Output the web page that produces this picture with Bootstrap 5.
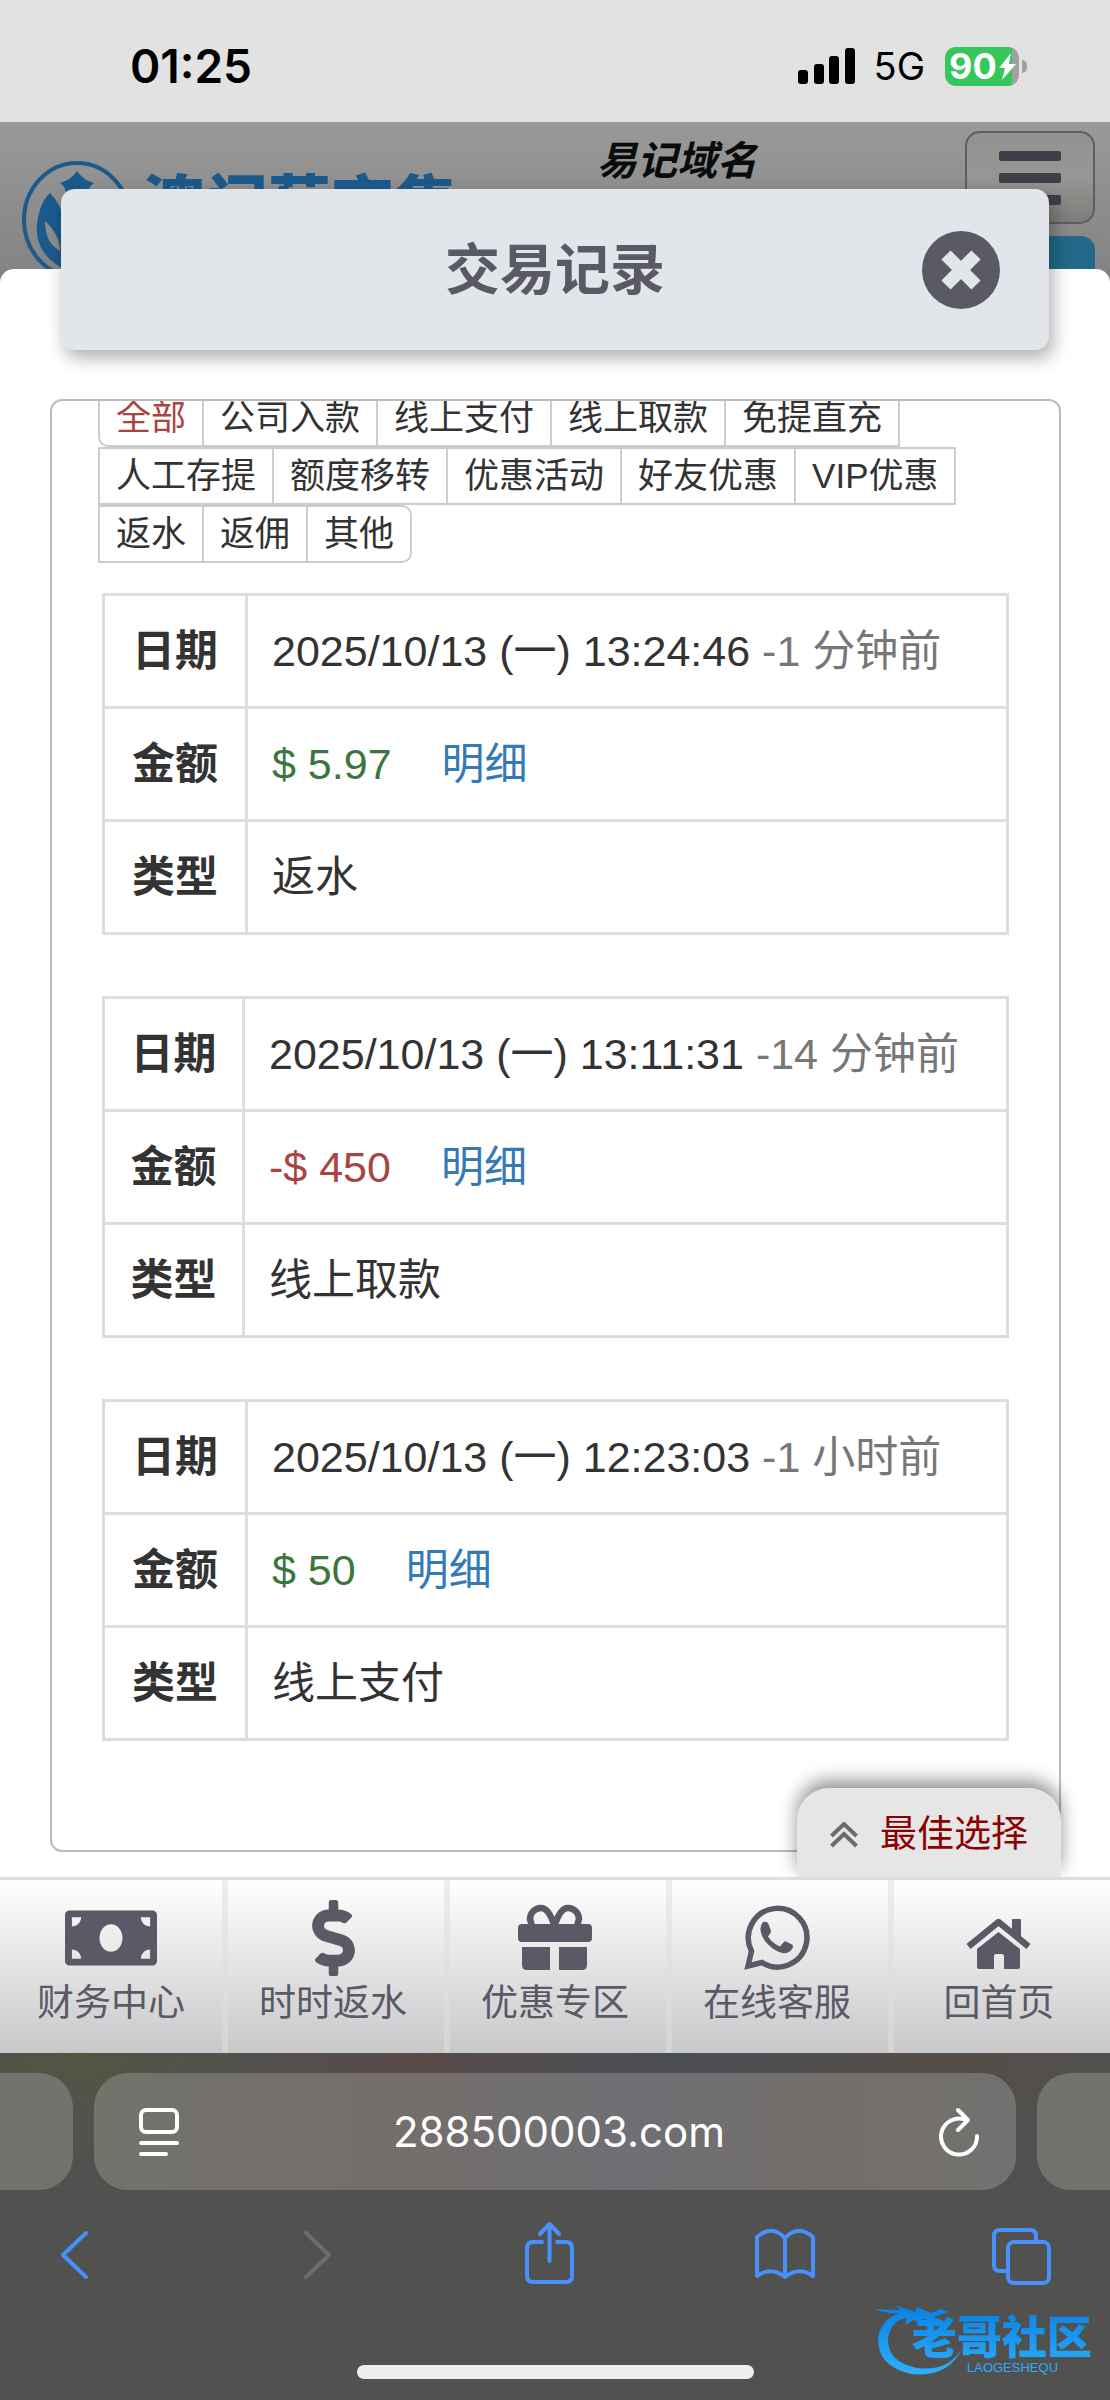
<!DOCTYPE html>
<html lang="zh-CN">
<head>
<meta charset="utf-8">
<meta name="viewport" content="width=device-width, initial-scale=1">
<title>交易记录</title>
<link rel="stylesheet" href="https://cdn.jsdelivr.net/npm/bootstrap@5.3.0/dist/css/bootstrap.min.css">
<style>
  :root { --ink: #5a5966; --rule: #ddd; }
  body { font-family: "Liberation Sans", "Noto Sans CJK SC", sans-serif; color: #333; background: #fff; }
  svg { display: block; flex: none; }

  .status-strip { height: 122px; padding: 10px 84px 0 130px; background: #e2e2e2; color: #000; font-family: Inter, sans-serif; line-height: 48px; }
  .clock { font-size: 46px; font-weight: 600; }
  .net-type { font-size: 38px; margin: 0 20px 0 18px; }
  .battery { width: 74px; height: 39px; border-radius: 11px; background: linear-gradient(90deg, #35c759 67px, #a0a0a0 67px); color: #fff; font-size: 36px; font-weight: 700; line-height: 39px; padding-left: 4px; margin-right: 7px; }
  .battery-nub { right: -8px; top: 13px; width: 5px; height: 13px; background: #a0a0a0; border-radius: 0 5px 5px 0; }
  .battery-bolt { right: 3px; top: 6px; }

  .site-top { height: 161px; padding: 9px 15px 0 20px; background: linear-gradient(#999, #828282); overflow: hidden; }
  .brand { padding-top: 28px; color: #1c5a8c; font-size: 63px; font-weight: 900; line-height: 92px; gap: 10px; }
  .domain-tip { color: #0a0c0c; font-size: 40px; font-weight: 700; font-style: italic; line-height: 60px; padding-left: 140px; }
  .menu-btn { width: 130px; height: 93px; border: 2px solid #5d5d63; border-radius: 15px; background: linear-gradient(#929292, #969694 50%, #7c7c79); }
  .blue-btn { width: 130px; height: 60px; border: 0; border-radius: 14px; background: #236a8a; }

  .sheet { margin-top: -14px; border-radius: 14px 14px 0 0; background: #fff; padding: 0 49px 25px 50px; }
  .sheet-title { margin: -80px 12px 49px 11px; height: 161px; padding: 0 49px; background: #e2e6eb; border-radius: 14px; box-shadow: 4px 8px 18px rgba(0,0,0,.32); color: var(--ink); }
  .sheet-title h1 { font-size: 55px; line-height: 80px; font-weight: 700; }
  .close-btn { width: 78px; height: 78px; border-radius: 50%; background: var(--ink); }
  .title-side { width: 78px; }

  .records { border: 2px solid #bbb; border-radius: 12px; padding: 0 50px 48px; overflow: hidden; }
  .kinds { margin: -12px -4px 30px; padding-left: 2px; }
  .kinds button { margin-left: -2px; border: 2px solid #ccc; background: #fff; padding: 0 16px; font-size: 35px; line-height: 54px; color: #333; }
  .kinds button.active { color: #a94442; }
  .kinds button:first-child { border-bottom-left-radius: 10px; }
  .kinds button:last-child { border-radius: 0 10px 10px 0; }

  .record { margin-bottom: 61px; font-size: 43px; line-height: 61px; border-color: var(--rule); color: #333; }
  .record th, .record td { padding: 25px 24px 24px; border: 3px solid var(--rule); color: #333; background: #fff; box-shadow: none; }
  .record td { padding-right: 0; }
  .record th { width: 143px; text-align: center; font-weight: 700; padding-left: 0; padding-right: 0; }
  .record-long th { width: 140px; }
  .ago { color: #777; }
  .record .gain { color: #3c763d; }
  .record .loss { color: #a94442; }
  .record a { color: #337ab7; text-decoration: none; margin-left: 50px; }

  .best-tab { right: 49px; bottom: 0; width: 264px; height: 89px; border: 0; border-radius: 32px 32px 0 0; background: #e6e6e6; color: #8b0000; font-size: 37px; line-height: 48px; padding: 4px 0 0; gap: 22px; box-shadow: 0 -8px 18px rgba(0,0,0,.42); }

  .dock { border-top: 3px solid var(--rule); background: linear-gradient(#fff, #c8c8ca); }
  .dock a { flex: 1 1 0; padding: 20px 0 25px; color: var(--ink); text-decoration: none; font-size: 37px; line-height: 48px; gap: 4px; }
  .dock a + a { box-shadow: inset 6px 0 0 rgba(222,222,220,.55); }

  .browser-bar { padding-top: 20px; background: radial-gradient(ellipse 200px 90px at 7% 0, rgba(88,92,40,.35), transparent), radial-gradient(ellipse 200px 90px at 38% 0, rgba(100,60,60,.35), transparent), radial-gradient(ellipse 240px 110px at 60% 0, rgba(66,72,92,.4), transparent), radial-gradient(ellipse 200px 100px at 84% 0, rgba(92,68,58,.35), transparent), #515150; }
  .tab-strip { gap: 21px; }
  .tab-peek { width: 73px; background: #72726f; }
  .peek-left { border-radius: 0 34px 34px 0; }
  .peek-right { border-radius: 34px 0 0 34px; }
  .address { height: 117px; border-radius: 34px; padding: 0 37px 0 45px; background: linear-gradient(90deg, #73726b, #746e6b 35%, #6e6f74 58%, #746e6a 80%, #727270); }
  .address button { color: #fff; }
  .site-name { font-family: Inter, sans-serif; font-size: 42px; line-height: 56px; }
  .tools { padding: 28px 58px 0 44px; }
  .tools button { color: #4691fc; }
  .tools button:disabled { color: #6d6d6c; opacity: 1; }
  .home-line { width: 397px; height: 14px; border-radius: 7px; background: #eee; margin: 77px auto 20px; }
  .stamp { right: 15px; bottom: 22px; width: 224px; height: 78px; }
</style>
<script src="https://cdn.jsdelivr.net/npm/bootstrap@5.3.0/dist/js/bootstrap.bundle.min.js"></script>
</head>
<body class="d-flex flex-column min-vh-100">

<div class="status-strip d-flex align-items-center">
  <span class="clock me-auto">01:25</span>
  <svg width="58" height="36" viewBox="0 0 58 36" fill="#000"><rect x="0" y="22" width="10" height="14" rx="3"/><rect x="16" y="16" width="10" height="20" rx="3"/><rect x="31" y="8" width="10" height="28" rx="3"/><rect x="47" y="0" width="10" height="36" rx="3"/></svg>
  <span class="net-type">5G</span>
  <span class="battery position-relative">90<span class="battery-nub position-absolute"></span>
    <svg class="battery-bolt position-absolute" width="18" height="27" viewBox="0 0 18 27"><path d="M13 0 1 15h6L4 27 18 11h-7z" fill="#fff"/></svg></span>
</div>

<header class="site-top d-flex align-items-start">
  <div class="brand d-flex align-items-start">
    <svg width="112" height="124" viewBox="0 0 112 124" fill="#1c5a8c"><ellipse cx="57" cy="61" rx="53" ry="57" fill="none" stroke="#1c5a8c" stroke-width="4"/><path d="M57 12Q63 21 74 24Q67 28 67 42H47Q47 28 40 24Q51 21 57 12ZM30 34Q46 50 43 72Q39 94 52 114Q14 98 17 66Q19 44 30 34Z"/><path d="M25 62Q40 76 40 92Q25 84 25 62Z" fill="#8d8d8d"/></svg>
    <span>澳门葡京集</span>
  </div>
  <span class="domain-tip">易记域名</span>
  <div class="d-flex flex-column gap-2 ms-auto">
    <button class="menu-btn p-0" aria-label="菜单"><svg class="mx-auto" width="62" height="54" viewBox="0 0 62 54" fill="#3f3e49"><rect width="62" height="10" rx="2"/><rect y="22" width="62" height="10" rx="2"/><rect y="44" width="62" height="10" rx="2"/></svg></button>
    <button class="blue-btn mt-1" aria-label="更多"></button>
  </div>
</header>

<main class="sheet position-relative">
  <div class="sheet-title position-relative d-flex align-items-center justify-content-between">
    <span class="title-side"></span>
    <h1 class="m-0">交易记录</h1>
    <button class="close-btn border-0 p-0" aria-label="关闭"><svg class="mx-auto" width="42" height="42" viewBox="0 0 42 42"><path d="M6 6 36 36M36 6 6 36" stroke="#e2e6eb" stroke-width="13"/></svg></button>
  </div>

  <section class="records">
    <div class="kinds d-flex flex-wrap">
      <button class="active">全部</button><button>公司入款</button><button>线上支付</button><button>线上取款</button><button>免提直充</button>
      <button>人工存提</button><button>额度移转</button><button>优惠活动</button><button>好友优惠</button><button>VIP优惠</button>
      <button>返水</button><button>返佣</button><button>其他</button>
    </div>

    <table class="table record">
      <tr><th scope="row">日期</th><td>2025/10/13 (一) 13:24:46 <span class="ago">-1 分钟前</span></td></tr>
      <tr><th scope="row">金额</th><td><span class="gain">$ 5.97</span><a href="#">明细</a></td></tr>
      <tr><th scope="row">类型</th><td>返水</td></tr>
    </table>
    <table class="table record record-long">
      <tr><th scope="row">日期</th><td>2025/10/13 (一) 13:11:31 <span class="ago">-14 分钟前</span></td></tr>
      <tr><th scope="row">金额</th><td><span class="loss">-$ 450</span><a href="#">明细</a></td></tr>
      <tr><th scope="row">类型</th><td>线上取款</td></tr>
    </table>
    <table class="table record">
      <tr><th scope="row">日期</th><td>2025/10/13 (一) 12:23:03 <span class="ago">-1 小时前</span></td></tr>
      <tr><th scope="row">金额</th><td><span class="gain">$ 50</span><a href="#">明细</a></td></tr>
      <tr><th scope="row">类型</th><td>线上支付</td></tr>
    </table>
  </section>

  <button class="best-tab position-absolute d-flex align-items-center justify-content-center">
    <svg width="28" height="26" viewBox="0 0 28 26" fill="none" stroke="#6b6b6b" stroke-width="4"><path d="M1.500 14 14 2 26.500 14M1.500 24 14 12 26.500 24"/></svg>
    <span>最佳选择</span>
  </button>
</main>

<nav class="dock d-flex position-relative">
  <a href="#" class="d-flex flex-column align-items-center">
    <svg width="92" height="76" viewBox="0 -8 640 528" fill="currentColor"><path d="M608 64H32C14.330 64 0 78.330 0 96v320c0 17.670 14.330 32 32 32h576c17.670 0 32-14.330 32-32V96c0-17.670-14.330-32-32-32zM48 400v-64c35.350 0 64 28.650 64 64H48zm0-224v-64h64c0 35.350-28.650 64-64 64zm272 176c-44.190 0-80-42.990-80-96 0-53.020 35.820-96 80-96s80 42.980 80 96c0 53.030-35.830 96-80 96zm272 48h-64c0-35.350 28.650-64 64-64v64zm0-224c-35.350 0-64-28.650-64-64h64v64z"/></svg>
    <span>财务中心</span></a>
  <a href="#" class="d-flex flex-column align-items-center">
    <svg width="43" height="76" viewBox="0 0 288 512" fill="currentColor"><path d="M209.200 233.400l-108-31.600C88.700 198.200 80 186.500 80 173.500c0-16.300 13.200-29.500 29.500-29.500h66.300c12.200 0 24.200 3.700 34.200 10.500 6.100 4.100 14.300 3.100 19.500-2l34.800-34c7.100-6.900 6.100-18.400-1.800-24.500C238 74.800 207.400 64.100 176 64V16c0-8.800-7.200-16-16-16h-32c-8.800 0-16 7.200-16 16v48h-2.500C45.800 64-5.400 118.700.5 183.600c4.200 46.100 39.400 83.600 83.800 96.600l102.500 30c12.500 3.700 21.200 15.300 21.200 28.300 0 16.300-13.200 29.500-29.500 29.500h-66.300C100 368 88 364.300 78 357.500c-6.100-4.100-14.300-3.100-19.500 2l-34.800 34c-7.100 6.900-6.100 18.400 1.800 24.500 24.500 19.200 55.100 29.900 86.500 30v48c0 8.800 7.200 16 16 16h32c8.800 0 16-7.200 16-16v-48.200c46.600-.9 90.300-28.600 105.700-72.700 21.500-61.600-14.600-124.800-72.500-141.700z"/></svg>
    <span>时时返水</span></a>
  <a href="#" class="d-flex flex-column align-items-center">
    <svg width="76" height="76" viewBox="0 0 76 76" fill="currentColor"><rect x="1" y="24" width="74" height="18" rx="4"/><path d="M5 47h28v23H10q-5 0-5-5zM42 47h28v18q0 5-5 5H42z"/><path d="M37.500 26C35 18 31 8 24 8S13 14 13 19l2 7M37.500 26C40 18 44 8 51 8s11 6 11 11l-2 7" fill="none" stroke="currentColor" stroke-width="6.500"/></svg>
    <span>优惠专区</span></a>
  <a href="#" class="d-flex flex-column align-items-center">
    <svg width="76" height="76" viewBox="0 0 76 76" fill="currentColor"><path d="M9 66 12.500 51A29.300 29.300 0 1 1 23 62.500Z" fill="none" stroke="currentColor" stroke-width="5.500"/><path d="M24 22Q28 21 29.500 24L32 31Q32 33 29 36.500Q33 43 41 46.500L44 43Q46 40 48 42L53 44.500Q55 46 53 49Q50 54 43 53Q33 50 26 41Q18 29 24 22Z"/></svg>
    <span>在线客服</span></a>
  <a href="#" class="d-flex flex-column align-items-center">
    <svg width="76" height="76" viewBox="0 0 76 76" fill="currentColor"><path d="M7.500 46.500 37.500 22 67.500 46.500" fill="none" stroke="currentColor" stroke-width="6.500" stroke-linejoin="round"/><path d="M51 20q0-1 1-1h7q1 0 1 1v18l-9-7zM37.500 32 59 49v18q0 2-2 2H43V56q0-2-2-2h-6q-2 0-2 2v13H18q-2 0-2-2V49z"/></svg>
    <span>回首页</span></a>
</nav>

<footer class="browser-bar position-relative flex-grow-1">
  <div class="tab-strip d-flex">
    <div class="tab-peek peek-left"></div>
    <div class="address flex-grow-1 d-flex align-items-center justify-content-between">
      <button class="btn p-0 border-0" aria-label="阅读模式"><svg width="40" height="50" viewBox="0 0 40 50" fill="none" stroke="currentColor" stroke-width="4" stroke-linecap="round"><rect x="2" y="3" width="36" height="22" rx="5"/><path d="M2 36h36M2 47h25"/></svg></button>
      <button class="btn p-0 border-0 site-name">288500003.com</button>
      <button class="btn p-0 border-0" aria-label="刷新"><svg width="40" height="50" viewBox="0 0 40 50" fill="none" stroke="currentColor" stroke-width="4" stroke-linecap="round" stroke-linejoin="round"><path d="M38 29A18 18 0 1 1 27 13M19 3 29 13 19 23"/></svg></button>
    </div>
    <div class="tab-peek peek-right"></div>
  </div>
  <div class="tools d-flex justify-content-between">
    <button class="btn p-0 border-0" aria-label="后退"><svg width="60" height="70" viewBox="0 0 60 70" fill="none" stroke="currentColor" stroke-width="4" stroke-linecap="round" stroke-linejoin="round"><path d="M42 15 19 37 42 59"/></svg></button>
    <button class="btn p-0 border-0" disabled aria-label="前进"><svg width="60" height="70" viewBox="0 0 60 70" fill="none" stroke="currentColor" stroke-width="4" stroke-linecap="round" stroke-linejoin="round"><path d="M25 15 48 37 25 59"/></svg></button>
    <button class="btn p-0 border-0" aria-label="分享"><svg width="60" height="70" viewBox="0 0 60 70" fill="none" stroke="currentColor" stroke-width="4" stroke-linecap="round" stroke-linejoin="round"><path d="M25 24h-9q-6 0-6 6v28q0 6 6 6h33q6 0 6-6V30q0-6-6-6h-9M32.500 43V7M23 16l9.500-10 9.500 10"/></svg></button>
    <button class="btn p-0 border-0" aria-label="书签"><svg width="62" height="70" viewBox="0 0 62 70" fill="none" stroke="currentColor" stroke-width="4" stroke-linecap="round" stroke-linejoin="round"><path d="M31 20Q18 6 3 19V58Q17 48 31 59Q45 48 59 58V19Q44 6 31 20V59"/></svg></button>
    <button class="btn p-0 border-0" aria-label="标签页"><svg width="60" height="70" viewBox="0 0 60 70" fill="none" stroke="currentColor" stroke-width="4" stroke-linecap="round" stroke-linejoin="round"><path d="M44 22v-4q0-6-6-6H8q-6 0-6 6v29q0 6 6 6h7"/><rect x="16" y="24" width="41" height="41" rx="6"/></svg></button>
  </div>
  <div class="home-line"></div>
  <svg class="stamp position-absolute" viewBox="0 0 224 78">
    <defs><linearGradient id="sea" x1="0" y1="0" x2="0" y2="78" gradientUnits="userSpaceOnUse"><stop offset=".15" stop-color="#0a84e6"/><stop offset="1" stop-color="#2fb4ff"/></linearGradient></defs>
    <g fill="url(#sea)"><path d="M28 13Q10 20 7 38Q6 66 40 74Q78 78 92 47Q78 72 46 68Q16 62 17 38Q20 20 36 18L34 25L43 20L50 24L52 19L74 21L62 17L78 12L70 9L60 13L46 7L44 12L24 5L30 10L4 9Q14 14 28 13Z"/>
    <text x="41" y="54" font-family="Noto Sans CJK SC, sans-serif" font-weight="900" font-size="45">老哥社区</text>
    <text x="96" y="72" font-family="Liberation Sans, sans-serif" font-size="13">LAOGESHEQU</text></g>
  </svg>
</footer>
</body>
</html>
